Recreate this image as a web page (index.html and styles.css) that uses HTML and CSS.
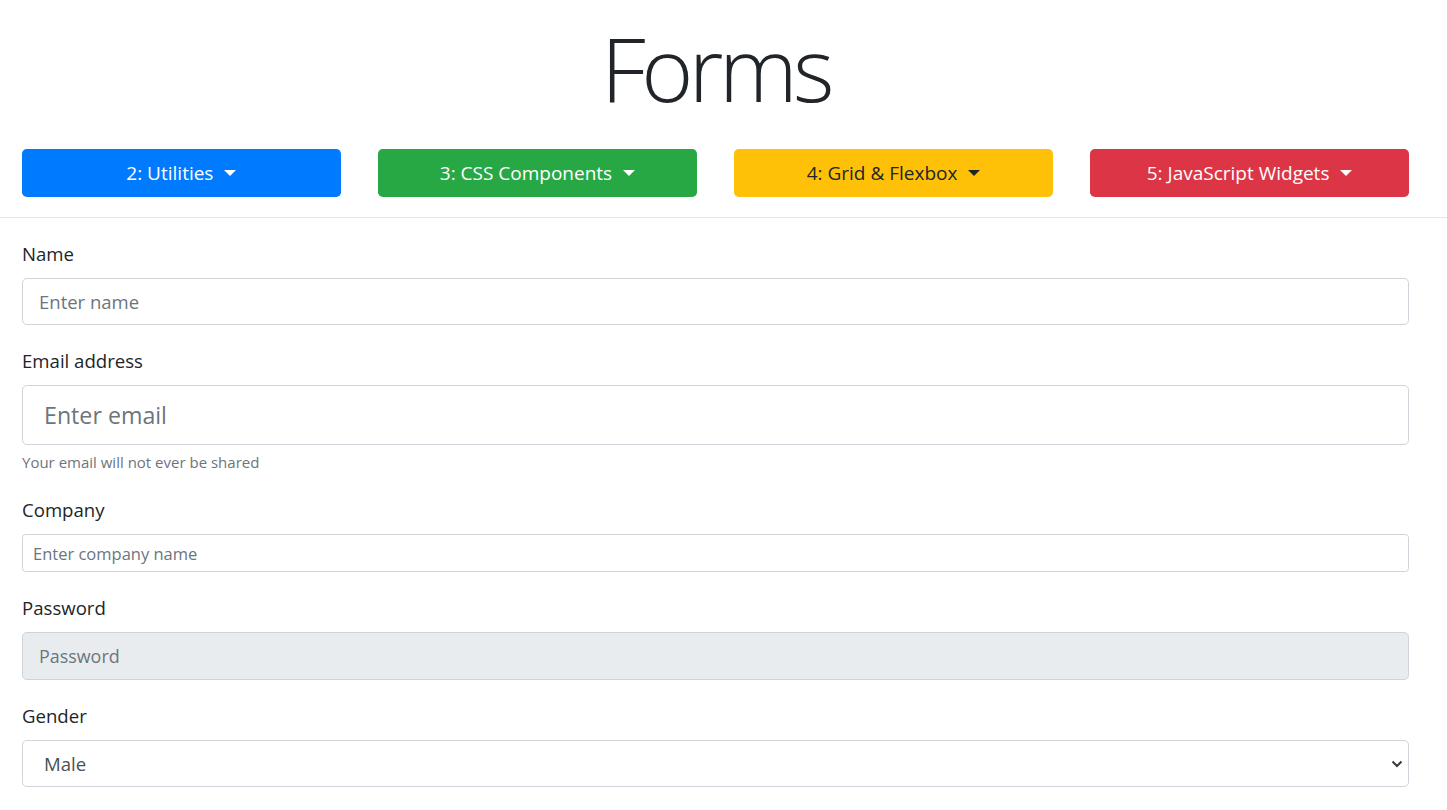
FILE: index.html
```html
<!DOCTYPE html>
<html lang="en">
<head>
<meta charset="utf-8">
<title>Forms</title>
<link rel="stylesheet" href="styles.css">
</head>
<body>
<header class="top">
  <h1 class="title">Forms</h1>
  <nav class="menus">
    <button class="btn btn-blue">2: Utilities<span class="caret"></span></button>
    <button class="btn btn-green">3: CSS Components<span class="caret"></span></button>
    <button class="btn btn-yellow">4: Grid &amp; Flexbox<span class="caret"></span></button>
    <button class="btn btn-red">5: JavaScript Widgets<span class="caret"></span></button>
  </nav>
</header>
<hr class="divider">
<form class="form">
  <div class="group">
    <label class="label" for="name">Name</label>
    <input class="control control-name" id="name" type="text" placeholder="Enter name">
  </div>
  <div class="group">
    <label class="label" for="email">Email address</label>
    <input class="control control-email" id="email" type="email" placeholder="Enter email">
    <small class="help">Your email will not ever be shared</small>
  </div>
  <div class="group">
    <label class="label" for="company">Company</label>
    <input class="control control-company" id="company" type="text" placeholder="Enter company name">
  </div>
  <div class="group">
    <label class="label" for="password">Password</label>
    <input class="control control-password" id="password" type="password" placeholder="Password" disabled>
  </div>
  <div class="group">
    <label class="label" for="gender">Gender</label>
    <div class="select-wrap">
      <select class="control control-select" id="gender">
        <option>Male</option>
        <option>Female</option>
      </select>
      <svg class="chevron" width="12" height="8" viewBox="0 0 12 8" aria-hidden="true"><path d="M1.5 1.5 L6 6 L10.5 1.5" fill="none" stroke="#343a40" stroke-width="2"/></svg>
    </div>
  </div>
</form>
</body>
</html>
```
FILE: styles.css
```css
* { box-sizing: border-box; }
html, body { margin: 0; padding: 0; }
body {
  font-family: "Open Sans", "Liberation Sans", sans-serif;
  color: #212529;
  background: #fff;
}
.top { padding: 14px 38px 0 22px; }
.title {
  margin: 0;
  text-align: center;
  font-weight: 300;
  font-size: 89px;
  line-height: 108px;
  letter-spacing: -4.5px;
  color: #212529;
}
.menus {
  margin-top: 27px;
  display: grid;
  grid-template-columns: repeat(4, 1fr);
  column-gap: 37.3px;
}
.btn {
  height: 48px;
  border: 1px solid transparent;
  border-radius: 4.8px;
  font-family: inherit;
  font-size: 19px;
  color: #fff;
  display: flex;
  align-items: center;
  justify-content: center;
  padding: 0 16px;
  cursor: pointer;
}
.btn-blue { background: #007bff; }
.btn-green { background: #28a745; }
.btn-yellow { background: #ffc107; color: #212529; }
.btn-red { background: #dc3545; }
.caret {
  display: inline-block;
  margin-left: 11px;
  width: 0; height: 0;
  border-top: 6px solid currentColor;
  border-left: 6px solid transparent;
  border-right: 6px solid transparent;
}
.divider {
  margin: 20px 0 0;
  border: 0;
  border-top: 1px solid rgba(0,0,0,0.1);
}
.form { padding: 21px 38px 20px 22px; }
.group { margin-bottom: 21px; display: flex; flex-direction: column; }
.label {
  font-size: 18.6px;
  line-height: 30px;
  margin-bottom: 9px;
}
.control {
  width: 100%;
  border: 1px solid #ced4da;
  border-radius: 4.8px;
  background: #fff;
  color: #495057;
  font-family: inherit;
  outline: none;
}
.control::placeholder { color: #6c757d; opacity: 1; }
.control-name { height: 47px; font-size: 18.5px; padding: 0 16px; }
.control-email { height: 60px; font-size: 23.2px; padding: 0 21px; }
.control-company { height: 38px; font-size: 16.5px; padding: 0 10px; border-radius: 3.5px; }
.control-password { height: 48px; font-size: 17.9px; padding: 0 16px; background: #e9ecef; }
.help {
  font-size: 15px;
  line-height: 24px;
  margin-top: 5px;
  color: #6c757d;
}
.select-wrap { position: relative; }
.control-select {
  display: block;
  height: 47px;
  font-size: 18.6px;
  padding: 0 21px;
  appearance: none;
  -webkit-appearance: none;
  color: #495057;
}
.chevron {
  position: absolute;
  right: 6px;
  top: 20px;
  pointer-events: none;
}
```
